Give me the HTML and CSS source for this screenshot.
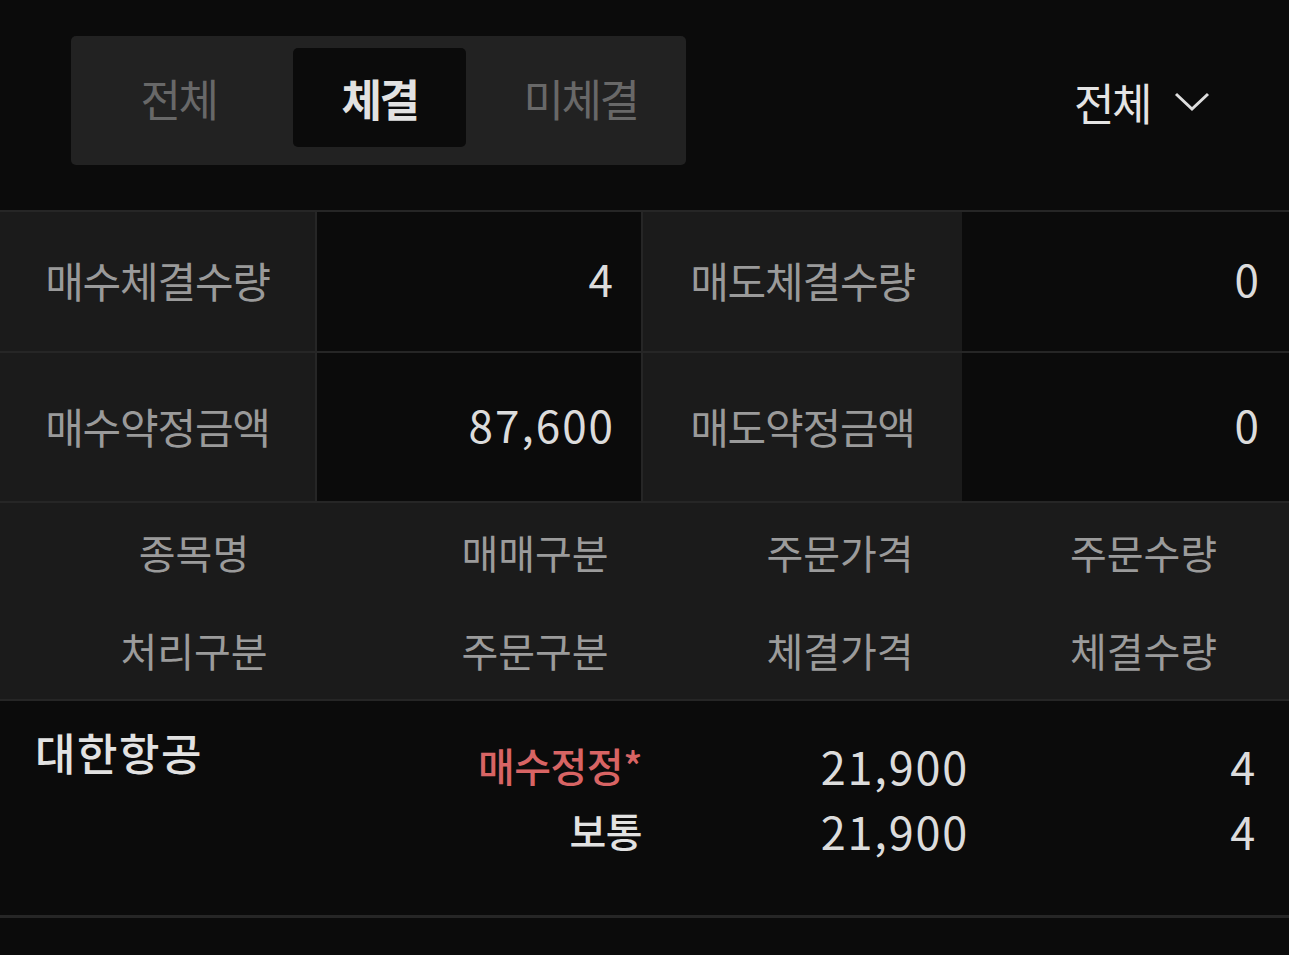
FILE: index.html
```html
<!DOCTYPE html>
<html lang="ko">
<head>
    <meta charset="UTF-8">
    <meta name="viewport" content="width=device-width, initial-scale=1.0">
    <title>체결 내역</title>
    <link rel="stylesheet" href="styles.css">
</head>
<body>
    <header class="top">
        <div class="seg">
            <button class="seg-btn">전체</button>
            <button class="seg-btn active">체결</button>
            <button class="seg-btn">미체결</button>
        </div>
        <button class="filter">
            <span>전체</span>
            <svg width="36" height="20" viewBox="0 0 36 20">
                <polyline points="2,2 18,17 34,2" fill="none" stroke="#dedede" stroke-width="3"/>
            </svg>
        </button>
    </header>

    <section class="summary">
        <div class="sum-row first">
            <div class="sum-label">매수체결수량</div>
            <div class="sum-value mid">4</div>
            <div class="sum-label">매도체결수량</div>
            <div class="sum-value">0</div>
        </div>
        <div class="sum-row second">
            <div class="sum-label">매수약정금액</div>
            <div class="sum-value mid">87,600</div>
            <div class="sum-label">매도약정금액</div>
            <div class="sum-value">0</div>
        </div>
    </section>

    <section class="list-head">
        <div class="head-row">
            <div>종목명</div>
            <div>매매구분</div>
            <div>주문가격</div>
            <div>주문수량</div>
        </div>
        <div class="head-row">
            <div>처리구분</div>
            <div>주문구분</div>
            <div>체결가격</div>
            <div>체결수량</div>
        </div>
    </section>

    <section class="list">
        <div class="list-row">
            <div class="cell name">대한항공</div>
            <div class="cell kind">
                <div class="buy">매수정정*</div>
                <div>보통</div>
            </div>
            <div class="cell num price">
                <div>21,900</div>
                <div>21,900</div>
            </div>
            <div class="cell num qty">
                <div>4</div>
                <div>4</div>
            </div>
        </div>
    </section>
</body>
</html>
```

FILE: styles.css
```css
body {
    margin: 0;
    background-color: #0b0b0b;
    font-family: 'Noto Sans CJK KR', 'Noto Sans', sans-serif;
    color: #dedede;
    width: 1289px;
    height: 955px;
    overflow: hidden;
}
button {
    font-family: inherit;
    border: none;
    background: none;
    padding: 0;
    cursor: pointer;
}

/* top: tabs + filter */
.top {
    display: flex;
    align-items: center;
    justify-content: space-between;
    padding: 36px 79px 45px 71px;
    border-bottom: 2px solid #262626;
}
.seg {
    display: grid;
    grid-template-columns: repeat(3, 1fr);
    width: 615px;
    height: 129px;
    box-sizing: border-box;
    padding: 12px 5px 18px 7px;
    background-color: #222222;
    border-radius: 5px;
}
.seg-btn {
    font-size: 44px;
    letter-spacing: -2.5px;
    color: #686868;
    border-radius: 5px;
    margin: 0 14px;
}
.seg-btn.active {
    background-color: #0b0b0b;
    color: #e2e2e2;
    font-weight: 700;
}
.filter {
    display: flex;
    align-items: center;
    gap: 24px;
    font-size: 44px;
    letter-spacing: -2.5px;
    color: #e4e4e4;
    margin-top: 2px;
}

/* summary table */
.sum-row {
    display: grid;
    grid-template-columns: 315px 328px 319px 1fr;
    border-bottom: 2px solid #262626;
}
.sum-row.first {
    height: 139px;
}
.sum-row.second {
    height: 148px;
}
.sum-label {
    display: flex;
    align-items: center;
    justify-content: center;
    padding-bottom: 4px;
    background-color: #1b1b1b;
    font-size: 42px;
    letter-spacing: -1.2px;
    color: #9a9a9a;
}
.sum-value {
    display: flex;
    align-items: center;
    justify-content: flex-end;
    padding: 0 28px 7px 0;
    font-size: 44px;
    letter-spacing: 2px;
    color: #dcdcdc;
}
.sum-value.mid {
    border-left: 2px solid #262626;
    border-right: 2px solid #262626;
    padding-right: 26px;
}

/* list header */
.list-head {
    background-color: #1b1b1b;
    border-bottom: 2px solid #262626;
}
.head-row {
    display: grid;
    grid-template-columns: 388px 294px 316px 1fr;
    height: 98px;
    align-items: center;
    text-align: center;
    font-size: 40px;
    color: #9b9b9b;
}

/* list rows */
.list-row {
    display: grid;
    grid-template-columns: 388px 294px 316px 1fr;
    height: 214px;
    border-bottom: 3px solid #262626;
}
.cell {
    padding-top: 32px;
    line-height: 65px;
    text-align: right;
}
.name {
    text-align: left;
    padding: 26px 0 0 35px;
    line-height: 50px;
    font-size: 44px;
    font-weight: 500;
    letter-spacing: 1.5px;
    color: #e2e2e2;
}
.kind {
    padding-right: 40px;
    font-size: 40px;
    font-weight: 500;
    letter-spacing: -0.5px;
    color: #e2e2e2;
}
.kind .buy {
    color: #d86464;
}
.num {
    font-size: 45px;
    letter-spacing: 1.8px;
    color: #dcdcdc;
}
.price {
    padding-right: 29px;
}
.qty {
    padding-right: 32px;
}
```
